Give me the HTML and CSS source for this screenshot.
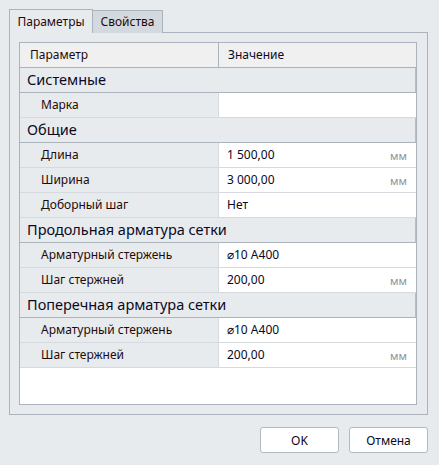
FILE: index.html
```html
<!DOCTYPE html>
<html>
<head>
    <meta charset="utf-8">
    <title>Параметры</title>
    <link rel="stylesheet" href="styles.css">
</head>
<body>
    <div class="dialog">
        <div class="tabs">
            <div class="tab active">Параметры</div>
            <div class="tab">Свойства</div>
        </div>

        <div class="panel">
            <div class="grid">
                <div class="row head">
                    <div class="name">Параметр</div>
                    <div class="value">Значение</div>
                </div>

                <div class="row group">Системные</div>
                <div class="row">
                    <div class="name">Марка</div>
                    <div class="value"></div>
                </div>

                <div class="row group">Общие</div>
                <div class="row">
                    <div class="name">Длина</div>
                    <div class="value">1 500,00<span class="unit">мм</span></div>
                </div>
                <div class="row">
                    <div class="name">Ширина</div>
                    <div class="value">3 000,00<span class="unit">мм</span></div>
                </div>
                <div class="row">
                    <div class="name">Доборный шаг</div>
                    <div class="value">Нет</div>
                </div>

                <div class="row group">Продольная арматура сетки</div>
                <div class="row">
                    <div class="name">Арматурный стержень</div>
                    <div class="value">⌀10 A400</div>
                </div>
                <div class="row">
                    <div class="name">Шаг стержней</div>
                    <div class="value">200,00<span class="unit">мм</span></div>
                </div>

                <div class="row group">Поперечная арматура сетки</div>
                <div class="row">
                    <div class="name">Арматурный стержень</div>
                    <div class="value">⌀10 A400</div>
                </div>
                <div class="row">
                    <div class="name">Шаг стержней</div>
                    <div class="value">200,00<span class="unit">мм</span></div>
                </div>
            </div>
        </div>

        <div class="buttons">
            <button>OK</button>
            <button>Отмена</button>
        </div>
    </div>
</body>
</html>
```

FILE: styles.css
```css
:root {
    --bg: #e8ebee;
    --line: #abb3bc;
    --row-line: #d6d9dd;
    --label: #1f0a0a;
    --text: #0a0a1e;
    --unit: #8d939b;
}

* {
    margin: 0;
    padding: 0;
    box-sizing: border-box;
}

body {
    font-family: 'Noto Sans', 'Open Sans', sans-serif;
    font-size: 12px;
    background: var(--bg);
    color: var(--text);
    width: 439px;
    height: 465px;
    overflow: hidden;
}

.dialog {
    padding: 9px 11px 0 9px;
}

.tabs {
    display: flex;
    align-items: flex-end;
    height: 24px;
    margin-bottom: -1px;
}

.tab {
    width: 70px;
    height: 23px;
    line-height: 21px;
    text-align: center;
    border: 1px solid var(--line);
    border-left: none;
    border-bottom: none;
    background: #d4d9df;
    color: var(--label);
}

.tab.active {
    width: 84px;
    height: 24px;
    line-height: 23px;
    border-left: 1px solid var(--line);
    background: var(--bg);
    position: relative;
    z-index: 1;
}

.panel {
    border: 1px solid var(--line);
    height: 383px;
    padding: 9px 10px 9px 9px;
}

.grid {
    border: 1px solid var(--line);
    background: #fff;
    height: 100%;
}

.row {
    display: flex;
    height: 25px;
    border-bottom: 1px solid var(--row-line);
}

.row .name {
    width: 199px;
    padding-left: 21px;
    background: var(--bg);
    border-right: 1px solid var(--row-line);
    line-height: 24px;
    color: var(--label);
}

.row .value {
    flex: 1;
    display: flex;
    justify-content: space-between;
    padding: 0 9px 0 8px;
    line-height: 24px;
}

.unit {
    color: var(--unit);
    font-size: 11px;
    padding-top: 1px;
}

.row.head {
    background: #f0f0f0;
    border-bottom: 1px solid var(--line);
}

.row.head .name {
    background: none;
    padding-left: 10px;
    border-right: 1px solid var(--line);
}

.row.head .value {
    padding-left: 9px;
}

.row.group {
    background: var(--bg);
    border-bottom: 1px solid var(--line);
    border-right: 1px solid #b8bec6;
    padding-left: 7px;
    font-size: 14.5px;
    line-height: 23px;
    color: var(--text);
}

.buttons {
    display: flex;
    justify-content: flex-end;
    gap: 10px;
    margin-top: 12px;
}

button {
    width: 79px;
    height: 26px;
    background: #fff;
    border: 1px solid #b3b9c0;
    border-radius: 3px;
    font-family: inherit;
    font-size: 12px;
    color: var(--text);
}
```
